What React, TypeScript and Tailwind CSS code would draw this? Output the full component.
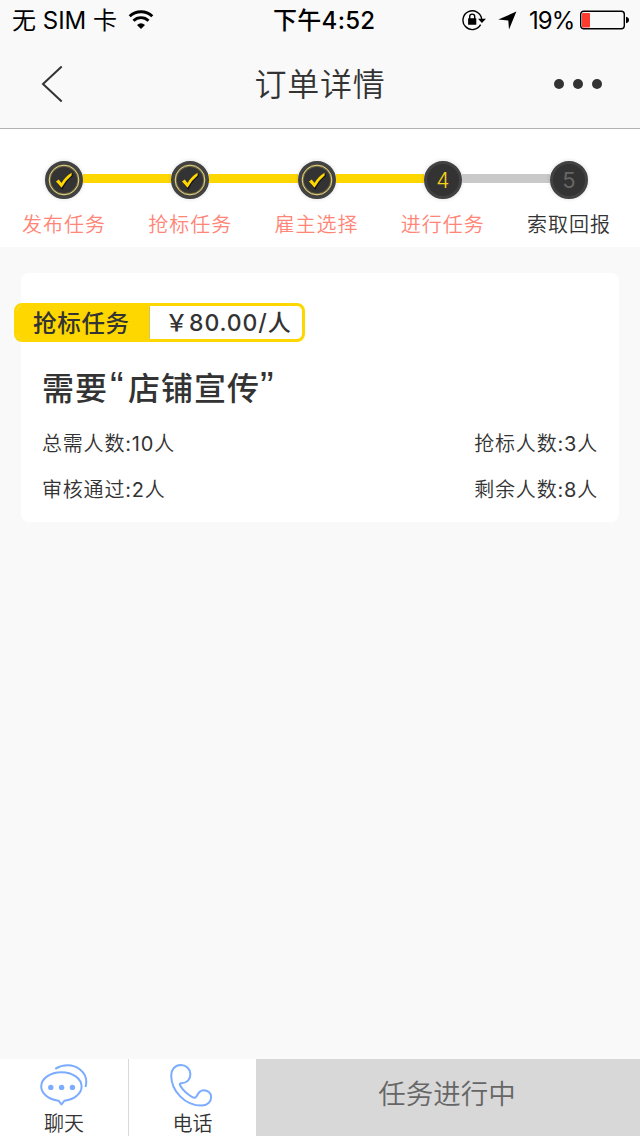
import React from "react";

const steps = [
  { label: "发布任务", state: "done" },
  { label: "抢标任务", state: "done" },
  { label: "雇主选择", state: "done" },
  { label: "进行任务", state: "current" },
  { label: "索取回报", state: "todo" },
];

function Wifi() {
  return (
    <svg width="26" height="20" viewBox="0 0 26 20" fill="none" stroke="#000" strokeWidth="2.9">
      <path d="M1.7 6.3a16.2 16.2 0 0 1 22.6 0" />
      <path d="M5.5 10.7a10.8 10.8 0 0 1 15 0" />
      <path d="M9 14.9Q13 11.5 17 14.9L13 19Z" fill="#000" stroke="none" />
    </svg>
  );
}

function RotationLock() {
  return (
    <svg width="24" height="22" viewBox="0 0 24 22" fill="none">
      <path d="M18.6 15.7A9.4 9.4 0 1 1 19.7 10.200" stroke="#000" strokeWidth="1.4" />
      <path d="M16 9.700h8L19.900 14Z" fill="#000" />
      <rect x="6.1" y="9.3" width="8.2" height="6.500" rx=".6" fill="#000" />
      <path d="M7.7 10V7.6a2.5 2.5 0 0 1 5 0V10" stroke="#000" strokeWidth="1.4" />
    </svg>
  );
}

function StatusBar() {
  return (
    <div className="flex h-10 items-center text-black">
      <div className="flex w-[273px] items-center pl-3">
        <span className="w-[116px] whitespace-nowrap pt-0.5 text-[24px] leading-10">无 SIM 卡</span>
        <Wifi />
      </div>
      <span className="w-[189px] whitespace-nowrap pt-0.5 text-[24px] font-medium leading-10 tracking-[0.3px]">
        下午4:52
      </span>
      <RotationLock />
      <svg className="ml-3" width="19" height="19" viewBox="0 0 19 19">
        <path d="M18.4.6 11 18.4 10.300 9.400.3 8.600Z" fill="#000" />
      </svg>
      <span className="ml-3 w-[51px] whitespace-nowrap pt-0.5 text-[24px] leading-10 tracking-[-0.9px]">19%</span>
      <svg width="49" height="20" viewBox="0 0 49 20">
        <rect x=".7" y="1.2" width="43.6" height="17.6" rx="3" fill="none" stroke="#000" strokeWidth="1.4" />
        <rect x="2" y="3" width="8" height="14.5" rx="1" fill="#ff3b30" />
        <path d="M46 6.8q3 .7 3 3.2t-3 3.2Z" fill="#000" />
      </svg>
    </div>
  );
}

function StepNode({ state, index }: { state: string; index: number }) {
  return (
    <div className="flex size-[38px] flex-none items-center justify-center rounded-full border-[3px] border-[#424242] bg-[#333] shadow-[0_0_4px_rgba(0,0,0,0.15)]">
      {state === "done" ? (
        <svg className="-m-1 flex-none" width="34" height="34" viewBox="0 0 34 34">
          <circle cx="17" cy="17" r="14.4" fill="none" stroke="#a99a55" strokeWidth="2.6" opacity=".45" />
          <circle cx="17" cy="17" r="14.8" fill="none" stroke="#e3d588" strokeWidth="1" />
          <path d="M11 20l4.200 5.500Q19 17.500 25 13V10.800" stroke="#111" strokeWidth="1.500" fill="none" />
          <path d="M9 18.400l2.700-1.800 2.800 3.400Q18.300 13.500 24.600 9.800v2.800Q18.500 17.500 14.500 24.800Z" fill="#ffd700" />
        </svg>
      ) : (
        <span
          className={
            state === "current"
              ? "text-[21px] font-[350] leading-none text-[#f6d21b]"
              : "text-[22px] leading-none text-[#666]"
          }
        >
          {index + 1}
        </span>
      )}
    </div>
  );
}

function Stepper() {
  return (
    <section className="h-[118px] bg-white pt-8">
      <div className="ml-[45px] flex w-[543px] items-center">
        {steps.map((s, i) => (
          <React.Fragment key={s.label}>
            {i > 0 && <div className={s.state === "todo" ? "mb-[3px] h-[9px] flex-1 bg-[#c9c9c9]" : "mb-[3px] h-[9px] flex-1 bg-[#ffd700]"} />}
            <StepNode state={s.state} index={i} />
          </React.Fragment>
        ))}
      </div>
      <div className="ml-px mt-[11px] grid w-[631px] grid-cols-5 text-center text-[20px] font-[350] leading-[30px] tracking-[1px]">
        {steps.map((s) => (
          <span key={s.label} className={s.state === "todo" ? "text-[#333]" : "text-[#ff8577]"}>
            {s.label}
          </span>
        ))}
      </div>
    </section>
  );
}

function Count({ label, value }: { label: string; value: number }) {
  return (
    <span>
      {label}
      <span className="font-normal">:{value}</span>人
    </span>
  );
}

function OrderCard() {
  return (
    <section className="mx-[21px] mt-[26px] h-[249px] rounded-[8px] bg-white pt-[30px] text-[#333]">
      <div className="-ml-[7px] flex h-[39px] w-[291px] overflow-hidden rounded-[8px] border-[3px] border-[#ffd700] bg-white font-medium">
        <div className="w-[133px] border-r border-[#d8c257] bg-[#ffd700] pl-4 text-[23.5px] leading-[35px] tracking-[0.7px]">
          抢标任务
        </div>
        <div className="flex flex-1 whitespace-nowrap pl-[15px] text-[23px] leading-[35px] tracking-[0.9px]">
          <span className="w-[24px]">￥</span>
          <span>80.00/人</span>
        </div>
      </div>
      <h1 className="mt-[24px] h-[46px] whitespace-nowrap pl-[21px] text-[32px] font-medium leading-[46px] tracking-[1px]">
        需要
        <span className="inline-block w-[20px] pl-[2px] font-['Liberation_Sans'] text-[41px] leading-[0]">“</span>
        店铺宣传
        <span className="inline-block font-['Liberation_Sans'] text-[41px] leading-[0]">”</span>
      </h1>
      <div className="mt-[17px] flex flex-col gap-4 px-[21px] text-[20px] font-[350] leading-[30px] tracking-[0.8px] text-[#333]">
        <div className="flex justify-between">
          <Count label="总需人数" value={10} />
          <Count label="抢标人数" value={3} />
        </div>
        <div className="flex justify-between">
          <Count label="审核通过" value={2} />
          <Count label="剩余人数" value={8} />
        </div>
      </div>
    </section>
  );
}

function BottomBar() {
  return (
    <footer className="flex h-[77px] bg-white text-[20px] text-[#333]">
      <button className="flex w-[129px] flex-col items-center border-r border-[#d9d9d9] pt-[4px]">
        <svg className="mr-px flex-none" width="50" height="44" viewBox="0 0 50 44" fill="none" stroke="#7bacff" strokeWidth="2">
          <path d="M19.500 37.700C9.500 36.500 2.200 30.500 2.200 23.600 2.200 15.500 11.200 9.200 22.400 9.200S42.600 15.500 42.600 23.600C42.600 30.500 35.500 36.500 25.500 37.700L22.500 41.500Z" strokeLinejoin="round" />
          <path d="M16.200 5.800C24 1.100 34 .8 41 6.600 47 11.500 48.500 17 46.500 24" />
          <g fill="#7bacff" stroke="none">
            <circle cx="11.800" cy="24.400" r="2.700" />
            <circle cx="22.600" cy="24.400" r="2.700" />
            <circle cx="33.400" cy="24.400" r="2.700" />
          </g>
        </svg>
        <span className="mt-[5px] font-[350] leading-[24px]">聊天</span>
      </button>
      <button className="flex w-[127px] flex-col items-center pt-[4px]">
        <svg className="mr-[3px] flex-none" width="44" height="44" viewBox="0 0 44 44" fill="none" stroke="#7bacff" strokeWidth="2" strokeLinejoin="round">
          <path d="M11.700 20.200C18 20.600 21.600 16 21.400 11 21.200 5.600 17 2 11.800 2 6 2 2.200 6.600 2.200 12.500 2.200 28 16 42.600 32.500 42.600 38.500 42.500 42.200 38.500 42.200 34.100 42.200 29.600 38.600 27.200 34.500 27.200 30.500 27.200 29 30.500 27.500 33.400 26.500 35.500 24 35 21.500 33 16.500 29.500 13.500 26.500 11.300 22.700 10.500 21.300 10.800 20.200 11.700 20.200Z" />
        </svg>
        <span className="mt-[5px] font-[350] leading-[24px]">电话</span>
      </button>
      <button className="flex-1 bg-[#d8d8d8] pb-[6px] pr-0.5 text-[27.500px] font-[350] text-[#666]">任务进行中</button>
    </footer>
  );
}

export default function App() {
  return (
    <div className="flex h-[1136px] w-[640px] flex-col overflow-hidden bg-[#f9f9f9] font-['Inter','Noto_Sans_CJK_SC',sans-serif]">
      <StatusBar />
      <header className="flex h-[89px] items-center justify-between border-b border-[#b2b2b2] pl-[41px] pr-[38px] text-[#333]">
        <svg width="22" height="38" viewBox="0 0 22 38" fill="none" stroke="#333" strokeWidth="2">
          <path d="M20.700 1.500 2 19 20.700 36.500" />
        </svg>
        <h1 className="ml-[23px] pt-[2px] text-[32px] font-[350] tracking-[0.700px]">订单详情</h1>
        <div className="flex gap-[9px]">
          <i className="size-[10px] rounded-full bg-[#333]" />
          <i className="size-[10px] rounded-full bg-[#333]" />
          <i className="size-[10px] rounded-full bg-[#333]" />
        </div>
      </header>
      <Stepper />
      <OrderCard />
      <div className="flex-1" />
      <BottomBar />
    </div>
  );
}
